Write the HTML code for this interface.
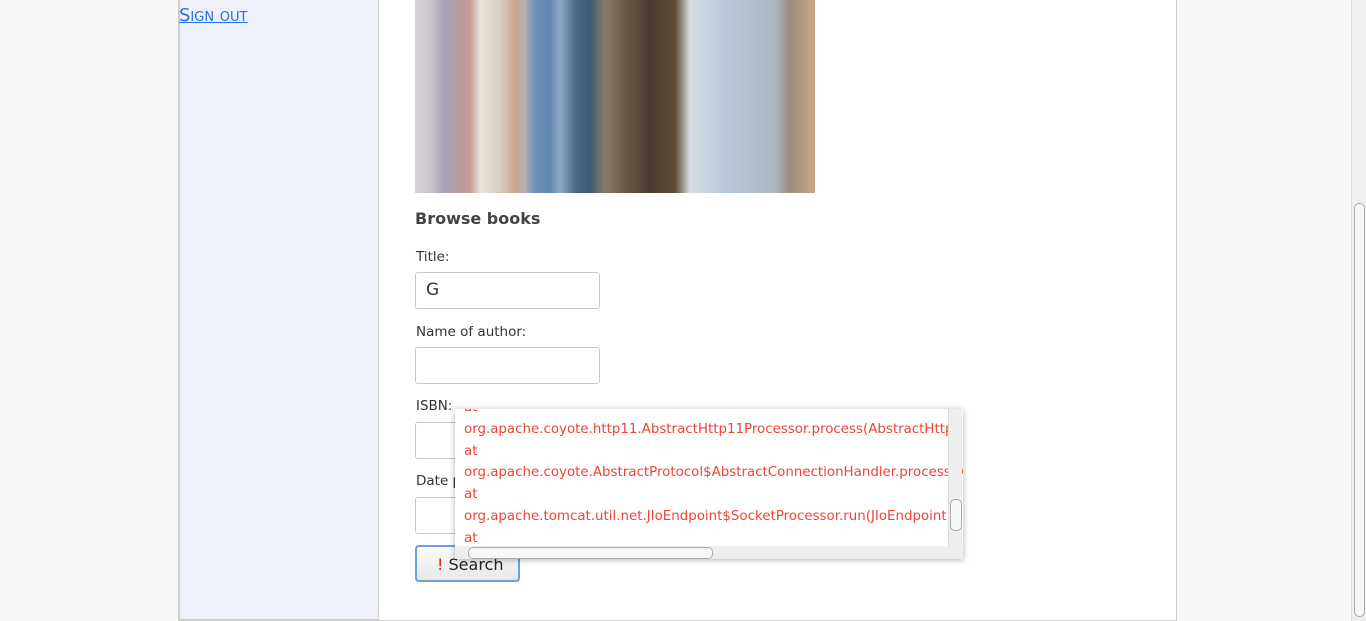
<!DOCTYPE html>
<html><head><style>
body{margin:0;width:1366px;height:621px;overflow:hidden;background:#f7f7f7;font-family:"DejaVu Sans","Liberation Sans",sans-serif;position:relative}
.wrap{position:absolute;left:178px;top:-2px;width:997px;height:621px;border:1px solid #d0d0d0;background:#fff}
.side{position:absolute;left:178px;top:0;width:198px;height:619px;background:#eef1f9;border-left:2px solid #ccc;border-right:1px solid #d6d6d6;border-bottom:1px solid #ccc}
.so{position:absolute;left:179px;top:5px;color:#1e73e8;font-size:18px;text-decoration:underline;font-variant:small-caps;font-family:"DejaVu Sans",sans-serif}
.img{position:absolute;left:415px;top:0;width:400px;height:193px;background:linear-gradient(90deg,#d8d3d6 0,#cbc6cc 15px,#a9a4b8 28px,#b89b9e 45px,#c89a90 55px,#e8e2dc 65px,#d6cfc0 85px,#caa58a 100px,#b0b2b8 110px,#6f8fb5 120px,#5f86b0 135px,#91aac5 145px,#4c6a87 160px,#3c5a72 175px,#8a7b6e 190px,#6a5a44 210px,#4a3d30 235px,#5c4a36 260px,#d8dde2 275px,#b8c9d8 310px,#aab7c2 360px,#9c8c7a 375px,#c2a384 395px)}
.h{position:absolute;left:415px;top:209px;font-size:16px;font-weight:bold;color:#444}
.l{position:absolute;left:416px;font-size:13.5px;color:#333}
.in{position:absolute;left:415px;width:185px;height:35px;border:1px solid #c8c8c8;border-radius:3px;background:#fff;font-size:17px;color:#333;box-sizing:border-box;padding:7px 10px}
.btn{position:absolute;left:415px;top:545px;width:105px;height:37px;border:2px solid #6ea0e0;border-radius:4px;background:linear-gradient(#fafafa,#e8e8e8);box-sizing:border-box;font-size:16px;color:#222;padding:8px 0 0 20px}
.pop{position:absolute;left:455px;top:409px;width:508px;height:150px;background:#fff;box-shadow:0 1px 6px rgba(0,0,0,.3);overflow:hidden}
.txt{position:absolute;left:9px;top:-12px;line-height:21.8px;color:#ee4433;white-space:nowrap;font-family:"DejaVu Sans",sans-serif;font-size:13.4px}
.vs{position:absolute;right:1px;top:0;width:13px;height:137px;background:#eee;border-left:1px solid #ddd;z-index:2}
.hs{position:absolute;left:0;top:137px;width:508px;height:13px;background:#eee;z-index:2}
.sb{position:absolute;right:0;top:0;width:14px;height:621px;background:#f0f0f0;border-left:1px solid #ddd}
</style></head><body>
<div class="wrap"></div>
<div class="side"></div>
<div class="so">Sign out</div>
<div class="img"></div>
<div class="h">Browse books</div>
<div class="l" style="top:249px">Title:</div>
<div class="in" style="top:272px;height:37px">G</div>
<div class="l" style="top:324px">Name of author:</div>
<div class="in" style="top:347px;height:37px"></div>
<div class="l" style="top:398px">ISBN:</div>
<div class="in" style="top:422px;height:37px"></div>
<div class="l" style="top:473px">Date p</div>
<div class="in" style="top:497px;height:37px"></div>
<div class="btn"><span style="color:#e02020">!</span> Search</div>
<div class="pop">
<div class="txt">at<br>org.apache.coyote.http11.AbstractHttp11Processor.process(AbstractHttp11Processor<br>at<br>org.apache.coyote.AbstractProtocol$AbstractConnectionHandler.process(AbstractProtocol<br>at<br>org.apache.tomcat.util.net.JIoEndpoint$SocketProcessor.run(JIoEndpoint.java<br>at</div>
<div class="vs"><div style="position:absolute;left:1px;top:90px;width:10px;height:30px;border:1px solid #aaa;border-radius:5px;background:#f8f8f8"></div></div>
<div class="hs"><div style="position:absolute;left:13px;top:1px;width:243px;height:10px;border:1px solid #aaa;border-radius:5px;background:#f8f8f8"></div></div>
</div>
<div class="sb"><div style="position:absolute;left:2px;top:203px;width:9px;height:412px;border:1px solid #aaa;border-radius:5px;background:#f6f6f6"></div></div>
</body></html>
